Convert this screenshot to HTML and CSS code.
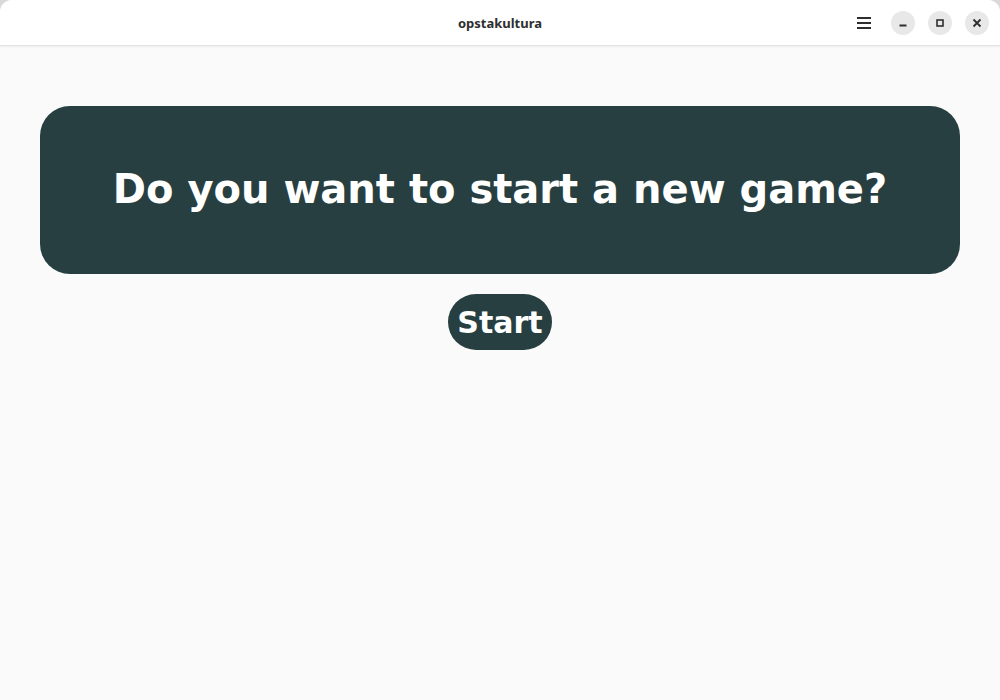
FILE: index.html
```html
<!DOCTYPE html>
<html lang="en">
<head>
<meta charset="utf-8">
<title>opstakultura</title>
<link rel="stylesheet" href="styles.css">
</head>
<body>
<div class="window">
  <header class="titlebar">
    <div class="title">opstakultura</div>
    <div class="controls">
      <button class="menu-btn" aria-label="Menu">
        <svg width="16" height="16" viewBox="0 0 16 16"><rect x="1" y="2" width="14" height="2" fill="#2e2e2e"/><rect x="1" y="7" width="14" height="2" fill="#2e2e2e"/><rect x="1" y="12" width="14" height="2" fill="#2e2e2e"/></svg>
      </button>
      <button class="win-btn" aria-label="Minimize">
        <svg width="10" height="10" viewBox="0 0 10 10"><rect x="1.5" y="6.5" width="7" height="2" fill="#2e2e2e"/></svg>
      </button>
      <button class="win-btn" aria-label="Maximize">
        <svg width="10" height="10" viewBox="0 0 10 10"><rect x="2" y="2" width="6" height="6" fill="none" stroke="#2e2e2e" stroke-width="1.6"/></svg>
      </button>
      <button class="win-btn" aria-label="Close">
        <svg width="10" height="10" viewBox="0 0 10 10"><path d="M1.5 1.5 L8.5 8.5 M8.5 1.5 L1.5 8.5" stroke="#2e2e2e" stroke-width="1.8"/></svg>
      </button>
    </div>
  </header>
  <main class="content">
    <section class="card">
      <h1 class="question">Do you want to start a new game?</h1>
    </section>
    <button class="start-btn">Start</button>
  </main>
</div>
</body>
</html>
```

FILE: styles.css
```css
html, body {
  margin: 0;
  padding: 0;
  height: 100%;
  background: #d9d9d9;
}
.window {
  height: 700px;
  background: #fafafa;
  border-radius: 12px 12px 0 0;
  overflow: hidden;
  display: flex;
  flex-direction: column;
}
.titlebar {
  height: 45px;
  flex: 0 0 auto;
  background: #ffffff;
  border-bottom: 1px solid #e2e2e2;
  box-shadow: 0 1px 2px rgba(0,0,0,0.05);
  display: flex;
  align-items: center;
  justify-content: center;
  position: relative;
}
.title {
  font-family: "Noto Sans", "DejaVu Sans", sans-serif;
  font-weight: 700;
  font-size: 13px;
  color: #2e2e2e;
}
.controls {
  position: absolute;
  right: 11px;
  top: 11px;
  display: flex;
  align-items: center;
  gap: 13px;
}
.menu-btn {
  width: 24px;
  height: 24px;
  border: none;
  background: transparent;
  padding: 0;
  display: flex;
  align-items: center;
  justify-content: center;
  margin-right: 2px;
}
.win-btn {
  width: 24px;
  height: 24px;
  border: none;
  border-radius: 50%;
  background: #e8e8e8;
  padding: 0;
  display: flex;
  align-items: center;
  justify-content: center;
}
.content {
  padding: 60px 40px 0;
  display: flex;
  flex-direction: column;
  align-items: center;
  gap: 20px;
}
.card {
  align-self: stretch;
  background: #273f40;
  border-radius: 30px;
  padding: 60px 20px 61px;
  text-align: center;
}
.question {
  margin: 0;
  font-family: "DejaVu Sans", sans-serif;
  font-weight: 700;
  font-size: 40px;
  line-height: 47px;
  color: #ffffff;
}
.start-btn {
  height: 56px;
  padding: 0 9.5px;
  border: none;
  border-radius: 28px;
  background: #273f40;
  color: #ffffff;
  font-family: "DejaVu Sans", sans-serif;
  font-weight: 700;
  font-size: 30px;
  line-height: 35px;
}
```
